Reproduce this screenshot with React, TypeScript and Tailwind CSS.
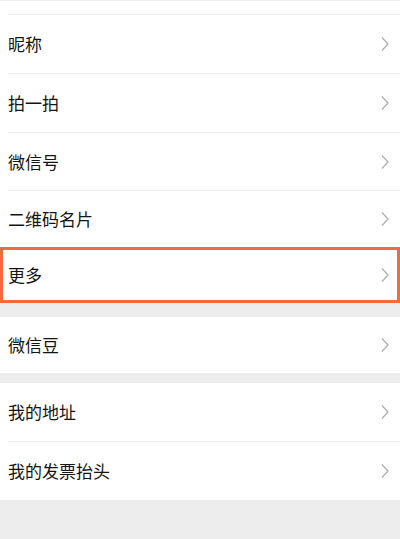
import React from "react";

function Chevron() {
  return (
    <svg width="8" height="16" viewBox="0 0 8 16" className="shrink-0">
      <polyline points="1,1.5 7,8 1,14.5" fill="none" stroke="#b0b0b0" strokeWidth="1.3" />
    </svg>
  );
}

function Row({ label, h, line = true }: { label: string; h: string; line?: boolean }) {
  return (
    <div className={`flex items-center justify-between pr-[11px] ${h} ${line ? "border-t border-[#ececec]" : ""}`}>
      <span className="text-[17px] text-[#141414]">{label}</span>
      <Chevron />
    </div>
  );
}

export default function App() {
  return (
    <div
      className="w-[400px] h-[539px] bg-[#ededed] overflow-hidden"
      style={{ fontFamily: '"Noto Sans CJK SC", "Noto Sans", sans-serif' }}
    >
      {/* 个人信息 */}
      <div className="bg-white border-t border-[#eeeeee]">
        <div className="h-[13px]" />
        <div className="pl-2">
          <Row label="昵称" h="h-[59px]" />
          <Row label="拍一拍" h="h-[59px]" />
          <Row label="微信号" h="h-[58px]" />
          <Row label="二维码名片" h="h-[57px]" />
        </div>
        {/* 高亮 更多 */}
        <div className="h-[56px] border-[3px] border-[#f26b3c] flex items-center justify-between pl-[5px] pr-[8px]">
          <span className="text-[17px] text-[#141414]">更多</span>
          <Chevron />
        </div>
      </div>

      <div className="h-[14px]" />

      <div className="bg-white pl-2">
        <Row label="微信豆" h="h-[56px]" line={false} />
      </div>

      <div className="h-[10px]" />

      <div className="bg-white pl-2">
        <Row label="我的地址" h="h-[58px]" line={false} />
        <Row label="我的发票抬头" h="h-[59px]" />
      </div>
    </div>
  );
}
